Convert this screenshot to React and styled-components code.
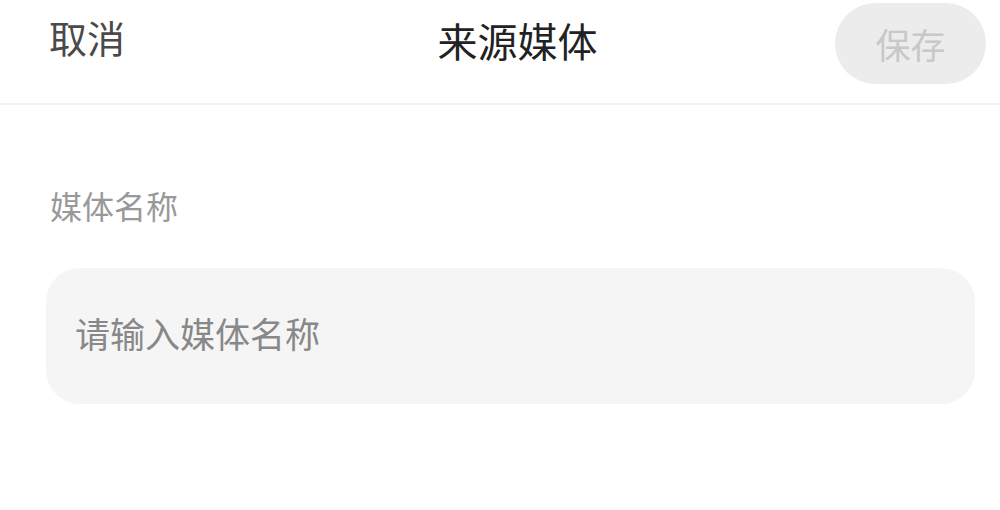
import styled, { createGlobalStyle } from 'styled-components';

const GlobalStyle = createGlobalStyle`
  body {
    margin: 0;
    background: #fff;
    font-family: "Noto Sans CJK SC", "Noto Sans", sans-serif;
  }
`;

const Page = styled.div`
  width: 1000px;
  height: 510px;
  background: #fff;
  overflow: hidden;
`;

const Header = styled.header`
  display: grid;
  grid-template-columns: 1fr auto 1fr;
  align-items: start;
  height: 103px;
  padding: 0 14px 0 49px;
  border-bottom: 2px solid #f2f2f2;
`;

const CancelButton = styled.button`
  justify-self: start;
  border: none;
  background: none;
  padding: 0;
  margin-top: 18px;
  font: inherit;
  font-size: 38px;
  line-height: 1;
  color: #4a4a4a;
  cursor: pointer;
`;

const Title = styled.h1`
  margin: 20px 0 0 0;
  font-size: 40px;
  line-height: 1;
  font-weight: 400;
  color: #222;
`;

const SaveButton = styled.button`
  justify-self: end;
  width: 151px;
  height: 81px;
  margin-top: 3px;
  border: none;
  border-radius: 41px;
  background: #ececec;
  font: inherit;
  font-size: 35px;
  color: #c8c8c8;
  cursor: default;
`;

const Form = styled.div`
  display: flex;
  flex-direction: column;
  padding: 80px 25px 0 46px;
`;

const Label = styled.label`
  margin-left: 4px;
  font-size: 32px;
  line-height: 40px;
  color: #999;
`;

const Input = styled.input`
  box-sizing: border-box;
  margin-top: 43px;
  height: 136px;
  padding: 0 29px 8px;
  border: none;
  border-radius: 34px;
  background: #f5f5f5;
  font: inherit;
  font-size: 35px;
  color: #333;
  outline: none;
  &::placeholder {
    color: #888;
  }
`;

const App = () => {
  return (
    <Page>
      <GlobalStyle />
      <Header>
        <CancelButton>取消</CancelButton>
        <Title>来源媒体</Title>
        <SaveButton disabled>保存</SaveButton>
      </Header>
      <Form>
        <Label>媒体名称</Label>
        <Input placeholder='请输入媒体名称' />
      </Form>
    </Page>
  );
};

export default App;
